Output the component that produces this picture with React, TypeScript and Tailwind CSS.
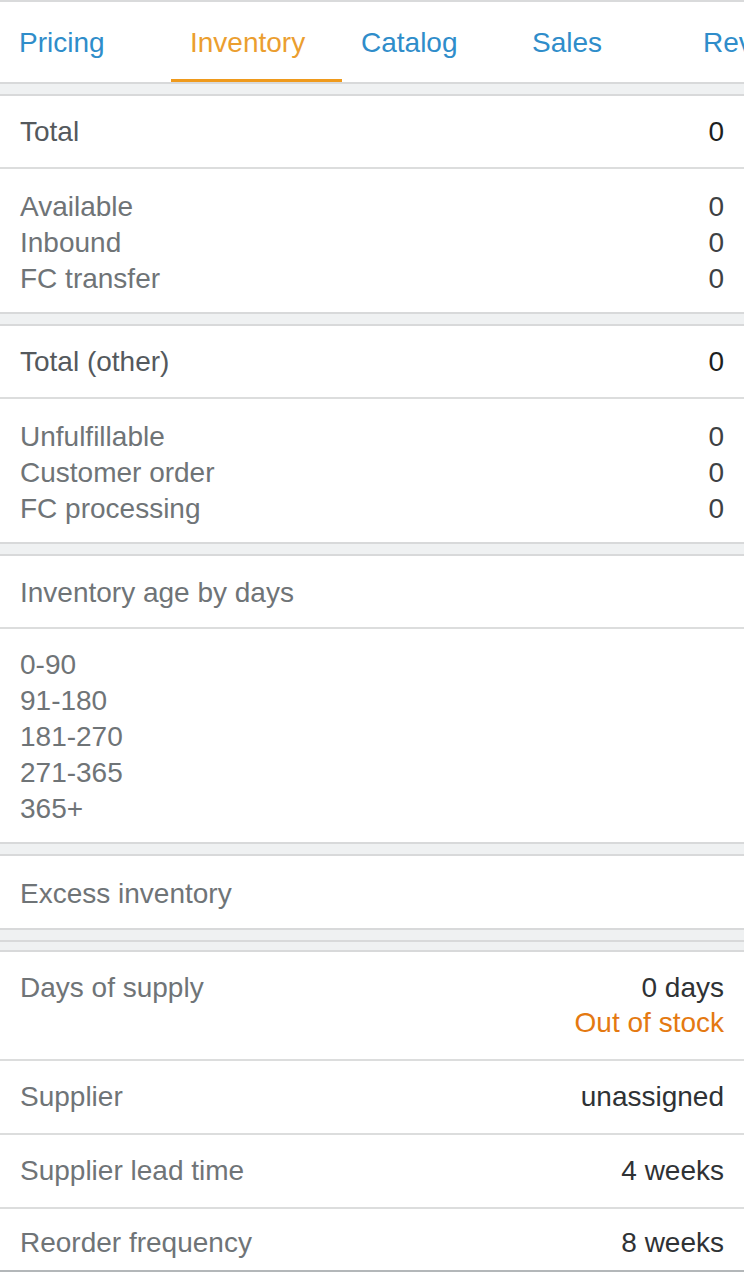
const tabs = ["Pricing", "Inventory", "Catalog", "Sales", "Reviews"];

const Separator = () => (
  <div className="h-[14px] border-y-2 border-[#d8d9da] bg-[#eff1f2]" />
);

const HeaderRow = ({ label, value }: { label: string; value?: string }) => (
  <div className="flex h-[73px] items-center justify-between border-b-2 border-[#dcdddd] px-5">
    <span className="text-[#54595d]">{label}</span>
    {value && <span className="text-[#1d1f21]">{value}</span>}
  </div>
);

const ListBlock = ({ rows }: { rows: [string, string?][] }) => (
  <div className="pt-[20px] pb-[15px] leading-[36px]">
    {rows.map(([label, value]) => (
      <div key={label} className="flex justify-between px-5">
        <span className="text-[#6f7477]">{label}</span>
        {value && <span className="text-[#3d4144]">{value}</span>}
      </div>
    ))}
  </div>
);

const DetailRow = ({
  label,
  value,
  last,
}: {
  label: string;
  value: string;
  last?: boolean;
}) => (
  <div
    className={
      last
        ? "flex h-[63px] items-center justify-between border-b-2 border-[#b3b7b9] px-5 pt-[6px]"
        : "flex h-[74px] items-center justify-between border-b-2 border-[#dcdddd] px-5"
    }
  >
    <span className="text-[#6f7477]">{label}</span>
    <span className="text-[#2f3235]">{value}</span>
  </div>
);

export default function App() {
  return (
    <div className="w-[744px] h-[1280px] overflow-hidden bg-white font-['Liberation_Sans',Arial,sans-serif] text-[28px]">
      <div className="h-[2px] bg-[#d9dadb]" />

      {/* Tabs */}
      <div className="flex h-[80px] overflow-hidden whitespace-nowrap">
        {tabs.map((tab) => (
          <div
            key={tab}
            className="flex w-[171px] shrink-0 flex-col justify-between"
          >
            <span
              className={
                tab === "Inventory"
                  ? "pl-[19px] pt-[20px] text-[#eb9e2f]"
                  : "pl-[19px] pt-[20px] text-[#2f8dca]"
              }
            >
              {tab}
            </span>
            {tab === "Inventory" && <div className="h-[3px] bg-[#ef9a1c]" />}
          </div>
        ))}
      </div>
      <Separator />

      <HeaderRow label="Total" value="0" />
      <ListBlock
        rows={[
          ["Available", "0"],
          ["Inbound", "0"],
          ["FC transfer", "0"],
        ]}
      />
      <Separator />

      <HeaderRow label="Total (other)" value="0" />
      <ListBlock
        rows={[
          ["Unfulfillable", "0"],
          ["Customer order", "0"],
          ["FC processing", "0"],
        ]}
      />
      <Separator />

      <div className="flex h-[73px] items-center border-b-2 border-[#dcdddd] px-5 pt-[3px] text-[#6f7477]">
        Inventory age by days
      </div>
      <div className="pt-[18px] pb-[15px] leading-[36px] text-[#6f7477]">
        {["0-90", "91-180", "181-270", "271-365", "365+"].map((r) => (
          <div key={r} className="px-5">
            {r}
          </div>
        ))}
      </div>
      <Separator />

      <div className="flex h-[72px] items-center px-5 pt-[3px] text-[#6f7477]">
        Excess inventory
      </div>
      <Separator />
      <div className="h-[10px] border-b-2 border-[#d8d9da] bg-[#eff1f2]" />

      {/* Days of supply */}
      <div className="flex justify-between border-b-2 border-[#dcdddd] px-5 pt-[18px] pb-[19px] leading-[35px]">
        <span className="text-[#6f7477]">Days of supply</span>
        <div className="flex flex-col items-end">
          <span className="text-[#2f3235]">0 days</span>
          <span className="text-[#e47911]">Out of stock</span>
        </div>
      </div>
      <DetailRow label="Supplier" value="unassigned" />
      <DetailRow label="Supplier lead time" value="4 weeks" />
      <DetailRow label="Reorder frequency" value="8 weeks" last />
    </div>
  );
}
